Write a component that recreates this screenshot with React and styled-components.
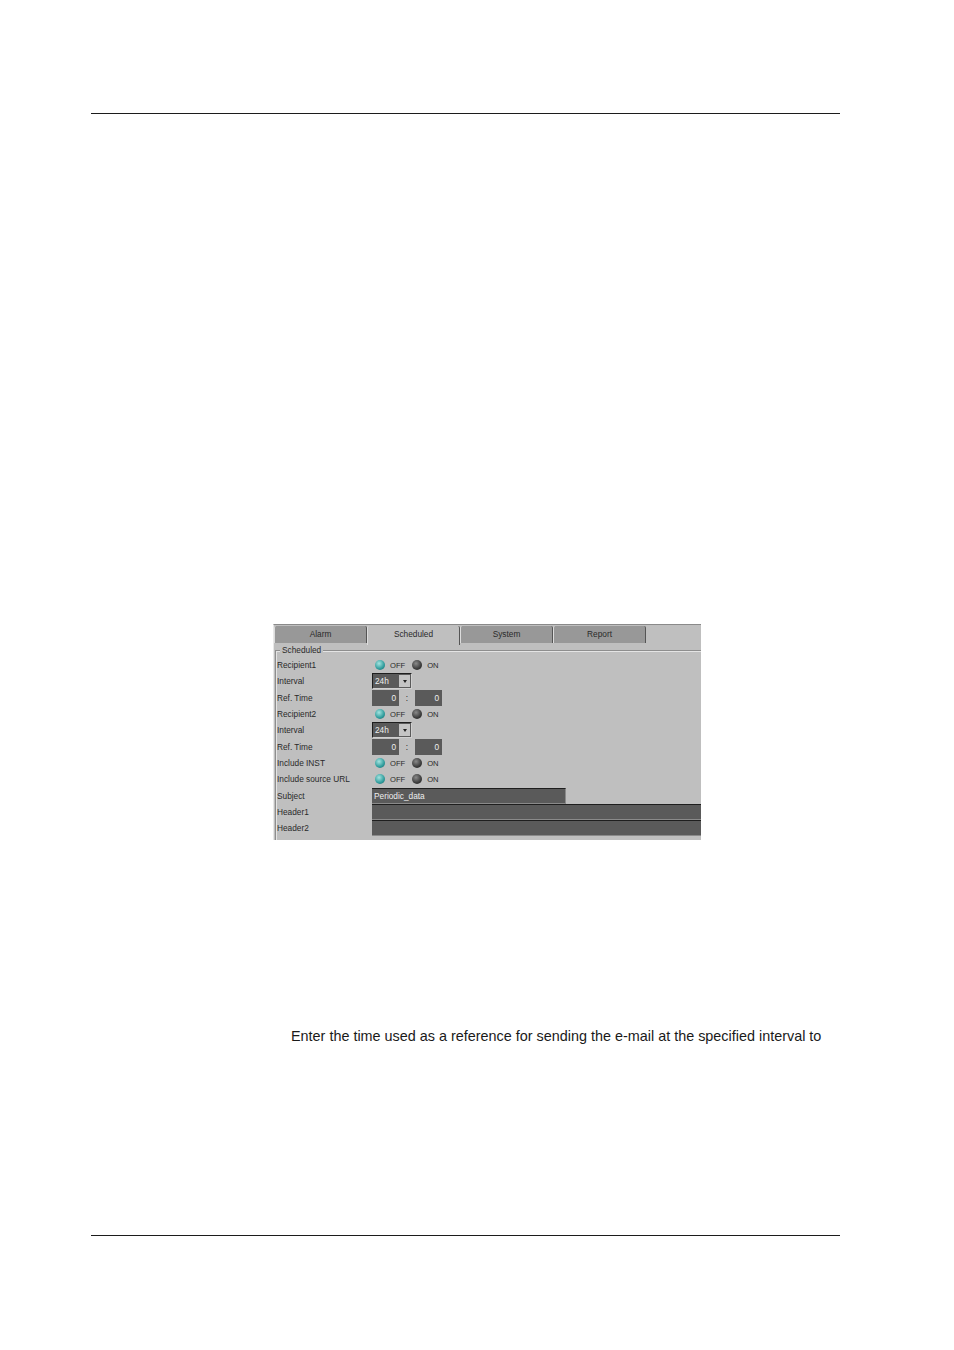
import React from "react"
import styled, { createGlobalStyle } from "styled-components"

const GlobalStyle = createGlobalStyle`
  html, body {
    margin: 0;
    background: #fff;
    font-family: "Liberation Sans", Arial, sans-serif;
  }
`

const Page = styled.div`
  width: 954px;
  height: 1350px;
  padding-top: 113px;
  box-sizing: border-box;
`

const Rule = styled.div`
  width: 749px;
  height: 1px;
  margin-left: 91px;
  background: #1c1c1c;
`

const Window = styled.div`
  width: 428px;
  height: 216px;
  margin: 510px 0 0 273px;
  background: #bfbfbf;
  border-top: 1px solid #8a8a8a;
  border-left: 1px solid #e8e8e8;
  box-sizing: border-box;
  overflow: hidden;
  font-size: 8.3px;
  color: #2a2a2a;
`

const TabBar = styled.div`
  display: flex;
  height: 18px;
  padding-top: 1px;
  box-sizing: border-box;
`

const Tab = styled.div`
  width: 93px;
  height: ${p => (p.$active ? "19px" : "17px")};
  line-height: 17px;
  text-align: center;
  background: ${p => (p.$active ? "#bfbfbf" : "#989898")};
  border-left: 1px solid #dcdcdc;
  border-right: 1px solid #555;
  border-radius: 2px 2px 0 0;
  box-sizing: border-box;
  position: relative;
  z-index: ${p => (p.$active ? 1 : 0)};
`

const Group = styled.div`
  margin: 7px 0 0 1px;
  border-top: 1px solid #8e8e8e;
  border-left: 1px solid #8e8e8e;
  box-shadow: inset 1px 1px 0 #e4e4e4;
  height: 190px;
  padding-left: 1px;
  position: relative;
`

const GroupTitle = styled.span`
  position: absolute;
  top: -6px;
  left: 4px;
  padding: 0 2px;
  line-height: 10px;
  background: #bfbfbf;
`

const Rows = styled.div`
  display: grid;
  grid-auto-rows: 16.32px;
  padding-top: 6px;
`

const Row = styled.div`
  display: flex;
  align-items: center;
`

const Label = styled.div`
  width: 95px;
  flex: none;
`

const Radio = styled.span`
  width: 10px;
  height: 10px;
  border-radius: 50%;
  flex: none;
  margin-left: ${p => (p.$first ? "3px" : "7px")};
  margin-right: 5px;
  background: ${p =>
    p.$on
      ? "radial-gradient(circle at 40% 35%, #a5e4e0, #2f9c9c 60%, #1c5f62)"
      : "radial-gradient(circle at 40% 35%, #8a8a8a, #3c3c3c 60%, #1d1d1d)"};
`

const RadioText = styled.span`
  font-size: 7.6px;
`

const Select = styled.div`
  width: 40px;
  height: 16px;
  display: flex;
  background: #5a5a5a;
  border: 1px solid #1e1e1e;
  border-right-color: #d0d0d0;
  border-bottom-color: #d0d0d0;
  box-sizing: border-box;
  color: #eee;
`

const SelectValue = styled.div`
  flex: 1;
  padding-left: 2px;
  line-height: 14px;
`

const Arrow = styled.div`
  width: 11px;
  margin: 1px;
  background: #c4c4c4;
  display: flex;
  align-items: center;
  justify-content: center;

  &::after {
    content: "";
    border: 2.5px solid transparent;
    border-top: 3px solid #222;
    border-bottom: 0;
  }
`

const NumField = styled.div`
  width: 27px;
  height: 16px;
  line-height: 16px;
  padding-right: 3px;
  text-align: right;
  box-sizing: border-box;
  background: #5a5a5a;
  color: #eee;
`

const Colon = styled.div`
  width: 16px;
  text-align: center;
`

const TextField = styled.div`
  height: 16px;
  line-height: 15px;
  padding-left: 2px;
  box-sizing: border-box;
  flex: ${p => (p.$width ? "none" : 1)};
  width: ${p => (p.$width ? `${p.$width}px` : "auto")};
  background: #5a5a5a;
  border-top: 1px solid #1e1e1e;
  border-bottom: 1px solid #8a8a8a;
  border-right: ${p => (p.$width ? "1px solid #8a8a8a" : "0")};
  color: #eee;
`

const Note = styled.p`
  margin: 189px 0 191px 291px;
  font-size: 14.4px;
  line-height: 15px;
  color: #1a1a1a;
  white-space: nowrap;
`

const OnOff = () => (
  <>
    <Radio $first $on />
    <RadioText>OFF</RadioText>
    <Radio />
    <RadioText>ON</RadioText>
  </>
)

const RecipientRows = ({ name }) => (
  <>
    <Row>
      <Label>{name}</Label>
      <OnOff />
    </Row>
    <Row>
      <Label>Interval</Label>
      <Select>
        <SelectValue>24h</SelectValue>
        <Arrow />
      </Select>
    </Row>
    <Row>
      <Label>Ref. Time</Label>
      <NumField>0</NumField>
      <Colon>:</Colon>
      <NumField>0</NumField>
    </Row>
  </>
)

const App = () => (
  <Page>
    <GlobalStyle />
    <Rule />
    <Window>
      <TabBar>
        <Tab>Alarm</Tab>
        <Tab $active>Scheduled</Tab>
        <Tab>System</Tab>
        <Tab>Report</Tab>
      </TabBar>
      <Group>
        <GroupTitle>Scheduled</GroupTitle>
        <Rows>
          <RecipientRows name="Recipient1" />
          <RecipientRows name="Recipient2" />
          <Row>
            <Label>Include INST</Label>
            <OnOff />
          </Row>
          <Row>
            <Label>Include source URL</Label>
            <OnOff />
          </Row>
          <Row>
            <Label>Subject</Label>
            <TextField $width={194}>Periodic_data</TextField>
          </Row>
          <Row>
            <Label>Header1</Label>
            <TextField />
          </Row>
          <Row>
            <Label>Header2</Label>
            <TextField />
          </Row>
        </Rows>
      </Group>
    </Window>
    <Note>Enter the time used as a reference for sending the e-mail at the specified interval to</Note>
    <Rule />
  </Page>
)

export default App
